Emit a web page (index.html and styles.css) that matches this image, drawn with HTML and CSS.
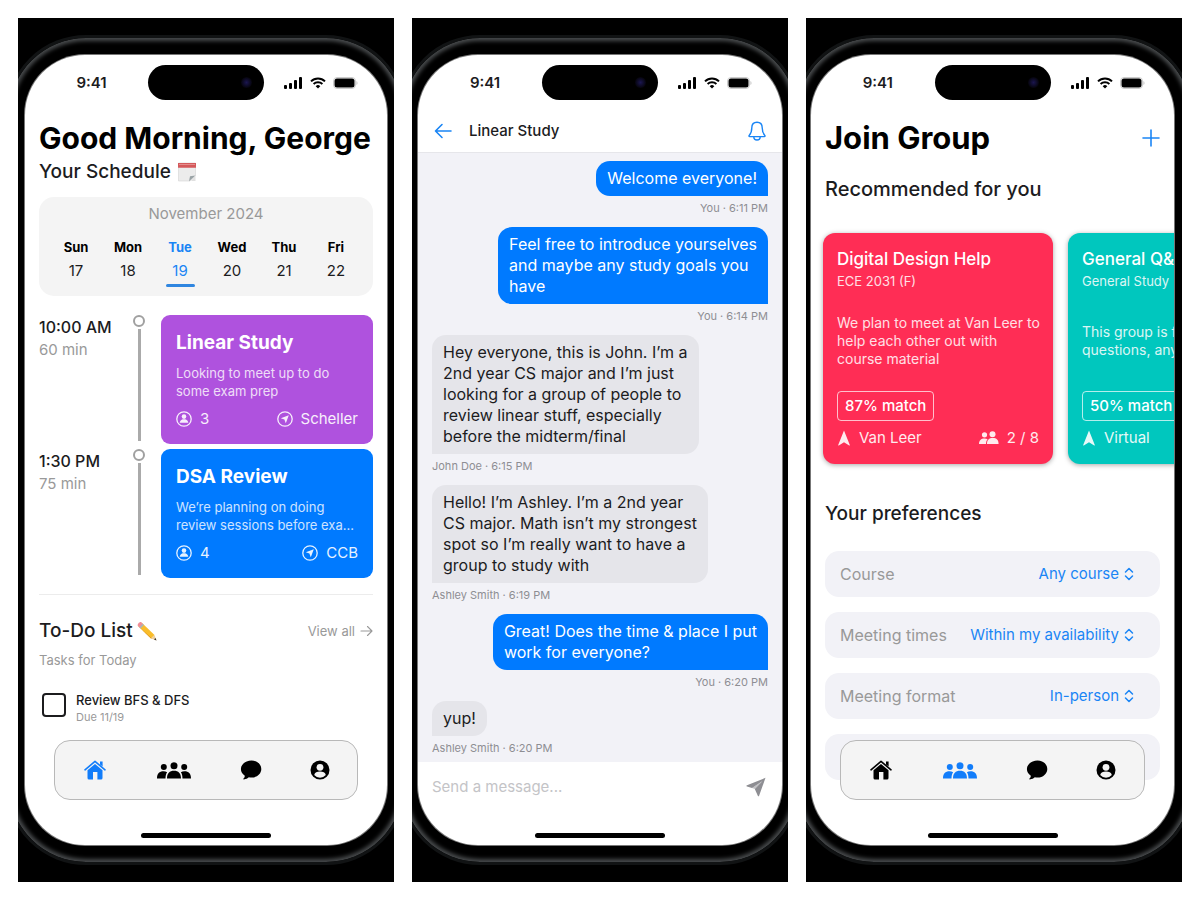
FILE: index.html
```html
<!DOCTYPE html>
<html lang="en">
<head>
<meta charset="utf-8">
<meta name="viewport" content="width=device-width, initial-scale=1">
<title>Study groups</title>
<link rel="stylesheet" href="styles.css">
</head>
<body>
<svg class="sprite" aria-hidden="true">
  <symbol id="signal" viewBox="0 0 19 12">
    <rect x="0" y="8" width="3" height="4" rx="1"/><rect x="5" y="6" width="3" height="6" rx="1"/><rect x="10" y="3" width="3" height="9" rx="1"/><rect x="15" y="0" width="3" height="12" rx="1"/>
  </symbol>
  <symbol id="wifi" viewBox="0 0 16 12">
    <g fill="none" stroke="currentColor" stroke-width="2"><path d="M1 4.4a10 10 0 0 1 14 0"/><path d="M3.6 7a6.4 6.4 0 0 1 8.800 0"/></g><path d="M5.700 9.200a3.300 3.300 0 0 1 4.600 0L8 11.600z"/>
  </symbol>
  <symbol id="battery" viewBox="0 0 25 12">
    <rect x=".5" y=".5" width="22" height="11" rx="3.500" fill="none" stroke="#ccc"/><rect x="1.500" y="1.500" width="20" height="9" rx="2.500"/><path d="M23.500 4v4c1.300-.6 1.300-3.400 0-4z" fill="#bbb"/>
  </symbol>
  <symbol id="home" viewBox="0 0 22 20">
    <path d="M1 9.800 11 1.400l10 8.400" fill="none" stroke="currentColor" stroke-width="1.600" stroke-linecap="round" stroke-linejoin="round"/><path d="M16 1.500h2.600v5L16 4.500z"/><path d="M3.500 10.200 11 4l7.500 6.200V18a1.500 1.500 0 0 1-1.500 1.500h-3.600V12H9v7.500H5A1.500 1.500 0 0 1 3.500 18z"/>
  </symbol>
  <symbol id="group" viewBox="0 0 34 17">
    <circle cx="17" cy="3.800" r="3.500"/><circle cx="6.800" cy="5" r="3"/><circle cx="27.200" cy="5" r="3"/>
    <path d="M10 16.500c0-5.200 2.600-7.700 7-7.700s7 2.500 7 7.700zM0 16.500c0-4.700 2.400-7.200 6.500-7.200 1.400 0 2.600.3 3.600 1C9 11.800 8.500 14 8.500 16.500zM34 16.500c0-4.700-2.400-7.200-6.500-7.200-1.400 0-2.600.3-3.600 1 1.100 1.500 1.600 3.700 1.600 6.200z"/>
  </symbol>
  <symbol id="chat" viewBox="0 0 22 20">
    <path d="M11.500.5C17 .5 21.300 4.200 21.300 9s-4.300 8.600-9.800 8.600c-1 0-1.800-.1-2.700-.3-1.200 1.100-2.700 1.900-5 2.100-.6 0-.7-.5-.3-.9.900-.8 1.300-1.700 1.300-2.800C2.300 14.100.9 11.700.9 9 .9 4.200 6 .5 11.500.5z"/>
  </symbol>
  <symbol id="profile" viewBox="0 0 20 20">
    <circle cx="10" cy="10" r="9.500"/><circle cx="10" cy="7.300" r="3.400" fill="#f4f4f4"/><path d="M4.200 15c.6-2.400 2.800-3.400 5.800-3.400s5.200 1 5.800 3.400a7.700 7.700 0 0 1-11.600 0z" fill="#f4f4f4"/>
  </symbol>
  <symbol id="member" viewBox="0 0 16 16">
    <circle cx="8" cy="8" r="7.200" fill="none" stroke="currentColor" stroke-width="1.300"/><circle cx="8" cy="5.600" r="2.300"/><path d="M3.700 11.800c.2-2 1.500-3 3-3.500h2.600c1.500.5 2.800 1.500 3 3.500z"/>
  </symbol>
  <symbol id="place" viewBox="0 0 16 16">
    <circle cx="8" cy="8" r="7.200" fill="none" stroke="currentColor" stroke-width="1.300"/><path d="m11.800 4.200-3 8-1.400-3.600-3.600-1.400z"/>
  </symbol>
  <symbol id="needle" viewBox="0 0 14 16"><path d="M7 .5 12.800 15c.1.400-.2.700-.6.500L7 12.200l-5.200 3.300c-.4.200-.7-.1-.6-.5z"/></symbol>
  <symbol id="pair" viewBox="0 0 20 14">
    <circle cx="5.500" cy="3.800" r="2.600"/><circle cx="13.500" cy="3.300" r="3"/><path d="M0 13c0-3.700 2-5.600 5.500-5.600 1.300 0 2.300.3 3.100.8C7.500 9.400 7 11 7 13zM8 13c0-4 2-5.900 5.800-5.900S19.600 9 19.600 13z"/>
  </symbol>
  <symbol id="updown" viewBox="0 0 10 14"><path d="m1.500 5 3.500-3.500L8.500 5M1.500 9 5 12.500 8.500 9" fill="none" stroke="currentColor" stroke-width="1.500" stroke-linecap="round" stroke-linejoin="round"/></symbol>
</svg>

<main class="board">
  <section class="panel" aria-label="Home">
    <div class="phone">
      <div class="screen">
        <header class="status">
          <span class="time">9:41</span><span class="island"><i class="lens"></i></span>
          <span class="radios"><svg class="signal"><use href="#signal"/></svg><svg class="wifi"><use href="#wifi"/></svg><svg class="battery"><use href="#battery"/></svg></span>
        </header>
        <div class="content">
          <h1 class="greeting">Good Morning, George</h1>
          <h2 class="schedule-title">Your Schedule
            <svg class="emoji" viewBox="0 0 20 20" aria-hidden="true"><path d="M1.500 1h17v12.500L13 19H1.500z" fill="#ececec" stroke="#d4d4d4" stroke-width=".6"/><path d="M1 1h18v4.800H1z" fill="#d4595b"/><path d="M2 2.500h16" stroke="#e58d8d" stroke-width="1"/><path d="M18.500 13.500 12 19.300l1-5z" fill="#9aa3a6"/><path d="M18.500 13.500 14 19h4.500z" fill="#e0e0e0"/></svg>
          </h2>
          <section class="calendar">
            <p class="month">November 2024</p>
            <ol class="days">
              <li><b>Sun</b><span>17</span></li>
              <li><b>Mon</b><span>18</span></li>
              <li class="today"><b>Tue</b><span>19</span></li>
              <li><b>Wed</b><span>20</span></li>
              <li><b>Thu</b><span>21</span></li>
              <li><b>Fri</b><span>22</span></li>
            </ol>
          </section>
          <ul class="agenda">
            <li class="slot">
              <div class="when"><strong>10:00 AM</strong><span>60 min</span></div>
              <div class="rail"></div>
              <article class="event purple">
                <h3>Linear Study</h3>
                <p>Looking to meet up to do<br>some exam prep</p>
                <div class="facts"><span><svg><use href="#member"/></svg>3</span><span><svg><use href="#place"/></svg>Scheller</span></div>
              </article>
            </li>
            <li class="slot">
              <div class="when"><strong>1:30 PM</strong><span>75 min</span></div>
              <div class="rail"></div>
              <article class="event blue">
                <h3>DSA Review</h3>
                <p>We’re planning on doing<br>review sessions before exa…</p>
                <div class="facts"><span><svg><use href="#member"/></svg>4</span><span><svg><use href="#place"/></svg>CCB</span></div>
              </article>
            </li>
          </ul>
          <section class="todo">
            <div class="todo-head">
              <h2>To-Do List
                <svg class="emoji" viewBox="0 0 20 20" aria-hidden="true"><path d="m4.500 1.500 13 12.500-3.500 3.500L1 5z" fill="#f9bd2b"/><path d="M2.800 6.600 15.500 18l-1.500-.5L1 5z" fill="#d88d16"/><path d="M6 3 2.600 6.600.8 4.800C0 3.500 2.500.5 4.200 1.200z" fill="#ef8d98"/><path d="M7 4 3.500 7.600 2.200 6.400 5.700 2.800z" fill="#a9b4ba"/><path d="m17.500 14 2 5.500-5.500-2z" fill="#efcf9b"/><path d="m18.600 17 .9 2.500-2.500-.9z" fill="#333"/></svg>
              </h2>
              <a href="#tasks">View all <svg class="go" viewBox="0 0 13 12"><path d="M1 6h11M7.500 1.500 12 6l-4.500 4.500" fill="none" stroke="currentColor" stroke-width="1.100" stroke-linecap="round" stroke-linejoin="round"/></svg></a>
            </div>
            <p class="sub">Tasks for Today</p>
            <label class="task" id="tasks"><input type="checkbox"><span class="task-text"><b>Review BFS &amp; DFS</b><small>Due 11/19</small></span></label>
          </section>
        </div>
        <nav class="tabs" aria-label="Main">
          <a class="on" href="#home" aria-label="Home"><svg class="t-home"><use href="#home"/></svg></a>
          <a href="#groups" aria-label="Groups"><svg class="t-group"><use href="#group"/></svg></a>
          <a href="#chats" aria-label="Chats"><svg class="t-chat"><use href="#chat"/></svg></a>
          <a href="#me" aria-label="Profile"><svg class="t-me"><use href="#profile"/></svg></a>
        </nav>
        <div class="home-bar"></div>
      </div>
    </div>
  </section>

  <section class="panel" aria-label="Chat">
    <div class="phone middle">
      <div class="screen">
        <header class="status">
          <span class="time">9:41</span><span class="island"><i class="lens"></i></span>
          <span class="radios"><svg class="signal"><use href="#signal"/></svg><svg class="wifi"><use href="#wifi"/></svg><svg class="battery"><use href="#battery"/></svg></span>
        </header>
        <div class="chat-head">
          <button class="icon-btn" aria-label="Back"><svg class="back" viewBox="0 0 18 16"><path d="M17 8H1.500M8 1.500 1.500 8 8 14.500" fill="none" stroke="currentColor" stroke-width="1.600" stroke-linecap="round" stroke-linejoin="round"/></svg></button>
          <h2>Linear Study</h2>
          <button class="icon-btn" aria-label="Notifications"><svg class="bell" viewBox="0 0 18 20"><path d="M9 1.200c-3.200 0-5.200 2.300-5.200 5.600 0 4.500-1 6-2.600 7.600-.5.600-.2 1.200.5 1.200h14.600c.7 0 1-.6.500-1.200-1.600-1.600-2.600-3.100-2.600-7.600 0-3.300-2-5.600-5.200-5.600zM5.800 15.800a3.200 3.200 0 0 0 6.400 0" fill="none" stroke="currentColor" stroke-width="1.400" stroke-linejoin="round"/></svg></button>
        </div>
        <div class="thread">
          <div class="msg mine"><p>Welcome everyone!</p><small>You · 6:11 PM</small></div>
          <div class="msg mine"><p>Feel free to introduce yourselves<br>and maybe any study goals you<br>have</p><small>You · 6:14 PM</small></div>
          <div class="msg"><p>Hey everyone, this is John. I’m a<br>2nd year CS major and I’m just<br>looking for a group of people to<br>review linear stuff, especially<br>before the midterm/final</p><small>John Doe · 6:15 PM</small></div>
          <div class="msg"><p>Hello! I’m Ashley. I’m a 2nd year<br>CS major. Math isn’t my strongest<br>spot so I’m really want to have a<br>group to study with</p><small>Ashley Smith · 6:19 PM</small></div>
          <div class="msg mine"><p>Great! Does the time &amp; place I put<br>work for everyone?</p><small>You · 6:20 PM</small></div>
          <div class="msg"><p>yup!</p><small>Ashley Smith · 6:20 PM</small></div>
        </div>
        <form class="composer">
          <input type="text" placeholder="Send a message..." aria-label="Message">
          <button class="icon-btn" type="button" aria-label="Send"><svg class="send" viewBox="0 0 20 20"><path d="M19.500.8 1 8.200c-.8.400-.8 1 0 1.300l5 1.400L16.500 4 8.800 12l3 6.800c.4.700 1 .7 1.300 0z"/><path d="m8.800 12 7.700-8L6 10.900z" opacity=".55"/></svg></button>
        </form>
        <div class="home-bar"></div>
      </div>
    </div>
  </section>

  <section class="panel" aria-label="Join group">
    <div class="phone last">
      <div class="screen">
        <header class="status">
          <span class="time">9:41</span><span class="island"><i class="lens"></i></span>
          <span class="radios"><svg class="signal"><use href="#signal"/></svg><svg class="wifi"><use href="#wifi"/></svg><svg class="battery"><use href="#battery"/></svg></span>
        </header>
        <div class="content">
          <div class="title-row">
            <h1>Join Group</h1>
            <button class="icon-btn" aria-label="New group"><svg class="plus" viewBox="0 0 18 18"><path d="M9 1v16M1 9h16" stroke="currentColor" stroke-width="1.600" stroke-linecap="round"/></svg></button>
          </div>
          <h2 class="rec-title">Recommended for you</h2>
          <div class="carousel">
            <article class="card red">
              <h3>Digital Design Help</h3>
              <p class="course">ECE 2031 (F)</p>
              <p class="about">We plan to meet at Van Leer to<br>help each other out with<br>course material</p>
              <span class="match">87% match</span>
              <div class="facts"><span><svg class="needle"><use href="#needle"/></svg>Van Leer</span><span><svg class="pair"><use href="#pair"/></svg>2 / 8</span></div>
            </article>
            <article class="card teal">
              <h3>General Q&amp;A</h3>
              <p class="course">General Study</p>
              <p class="about">This group is for<br>questions, any</p>
              <span class="match">50% match</span>
              <div class="facts"><span><svg class="needle"><use href="#needle"/></svg>Virtual</span></div>
            </article>
          </div>
          <h2 class="pref-title">Your preferences</h2>
          <div class="prefs">
            <div class="pref"><label for="course">Course</label><select id="course"><option>Any course</option></select><svg class="updown"><use href="#updown"/></svg></div>
            <div class="pref"><label for="times">Meeting times</label><select id="times"><option>Within my availability</option></select><svg class="updown"><use href="#updown"/></svg></div>
            <div class="pref"><label for="format">Meeting format</label><select id="format"><option>In-person</option></select><svg class="updown"><use href="#updown"/></svg></div>
            <div class="pref"></div>
          </div>
        </div>
        <nav class="tabs" aria-label="Main">
          <a href="#home" aria-label="Home"><svg class="t-home"><use href="#home"/></svg></a>
          <a class="on" href="#groups" aria-label="Groups"><svg class="t-group"><use href="#group"/></svg></a>
          <a href="#chats" aria-label="Chats"><svg class="t-chat"><use href="#chat"/></svg></a>
          <a href="#me" aria-label="Profile"><svg class="t-me"><use href="#profile"/></svg></a>
        </nav>
        <div class="home-bar"></div>
      </div>
    </div>
  </section>
</main>
</body>
</html>
```
FILE: styles.css
```css
*, ::before, ::after { box-sizing: border-box; }
body, h1, h2, h3, p, ol, ul { margin: 0; padding: 0; }
ol, ul { list-style: none; }
a { color: inherit; text-decoration: none; }
svg { display: block; fill: currentColor; flex: none; }
button, input, select { font: inherit; }

body {
  background: #fff;
  color: #1c1c1e;
  font: 400 15px/20px Inter, "Noto Sans", sans-serif;
}
.sprite { position: absolute; width: 0; height: 0; }

.board {
  display: grid;
  grid-template-columns: repeat(3, minmax(0, 1fr));
  gap: 18px;
  min-height: 100vh;
  padding: 18px;
}
.panel { display: flex; overflow: hidden; background: #000; }

/* device frame */
.phone {
  flex: 1;
  min-width: 0;
  display: flex;
  margin: 17px -12px;
  padding: 17px 16px;
  border: 3px solid #111314;
  border-radius: 80px;
  background: #000;
  box-shadow: inset 0 0 4px 3px #4a4d4f;
}
.phone.middle { padding: 17px 15px; }
.phone.last { padding: 17px 17px 17px 14px; }
.screen {
  position: relative;
  flex: 1;
  min-width: 0;
  display: flex;
  flex-direction: column;
  overflow: hidden;
  border-radius: 60px;
  background: #fff;
  box-shadow: 0 0 0 1px #777;
}

.status {
  display: grid;
  grid-template-columns: 1fr 116px 1fr;
  align-items: center;
  padding: 10px 0;
}
.time { padding-left: 10px; text-align: center; font-weight: 600; }
.island {
  display: flex;
  align-items: center;
  justify-content: flex-end;
  height: 35px;
  padding-right: 12px;
  border-radius: 18px;
  background: #000;
}
.lens { width: 11px; height: 11px; border-radius: 50%; background: radial-gradient(#1b1650, #05040c 70%); }
.radios { display: flex; align-items: center; gap: 7px; padding-left: 20px; color: #000; }
.signal { width: 19px; height: 12px; }
.wifi { width: 16px; height: 12px; }
.battery { width: 25px; height: 12px; }

.content { flex: 1; padding: 10px 14px 0; }
h1 { font-size: 31px; line-height: 36px; font-weight: 700; color: #000; white-space: nowrap; }
h2 { font-size: 19px; line-height: 26px; font-weight: 500; }
.greeting { font-size: 30px; }
.emoji { width: 20px; height: 20px; }

/* home */
.schedule-title { display: flex; align-items: center; gap: 6px; margin-top: 3px; }
.calendar { margin-top: 12px; padding: 7px 11px 9px; border-radius: 15px; background: #f4f4f4; }
.month { text-align: center; color: #999; }
.days { display: grid; grid-template-columns: repeat(6, 1fr); margin-top: 14px; }
.days li { display: flex; flex-direction: column; align-items: center; }
.days b { font-size: 13px; line-height: 18px; color: #000; }
.days span { margin-top: 5px; }
.days li::after { content: ""; width: 29px; height: 3px; margin-top: 3px; border-radius: 2px; }
.days .today, .days .today b { color: #1a85f5; }
.days .today::after { background: #2f86e0; }

.agenda { display: grid; gap: 5px; margin-top: 19px; }
.slot { display: grid; grid-template-columns: 94px 28px 1fr; }
.when strong { display: block; font-size: 16px; line-height: 24px; font-weight: 500; }
.when span { display: block; line-height: 22px; color: #999; }
.rail { display: flex; flex-direction: column; align-items: flex-start; gap: 2px; padding-bottom: 3px; }
.rail::before { content: ""; width: 12px; height: 12px; border: 2px solid #a0a0a0; border-radius: 50%; }
.rail::after { content: ""; flex: 1; width: 3px; margin-left: 5px; background: #aaa; }
.event { padding: 16px 15px 15px; border-radius: 9px; color: #fff; }
.event h3 { font-size: 19px; line-height: 24px; font-weight: 700; }
.event p { margin: 9px 0; font-size: 13px; line-height: 18px; opacity: .8; white-space: nowrap; }
.purple { background: #af52de; }
.blue { background: #007aff; }
.facts { display: flex; justify-content: space-between; opacity: .9; }
.facts span { display: flex; align-items: center; gap: 8px; }
.facts svg { width: 16px; height: 16px; }

.todo { margin-top: 16px; padding-top: 23px; border-top: 1px solid #ececec; }
.todo-head { display: flex; align-items: center; justify-content: space-between; }
.todo-head h2 { display: flex; align-items: center; gap: 4px; }
.todo-head a { display: flex; align-items: center; gap: 5px; font-size: 13px; color: #999; }
.go { width: 13px; height: 12px; }
.sub { margin-top: 7px; font-size: 13px; line-height: 18px; color: #999; }
.task { display: flex; gap: 10px; margin-top: 22px; padding-left: 3px; }
.task input { appearance: none; width: 24px; height: 24px; margin: 2px 0; border: 2px solid #1c1c1e; border-radius: 4px; }
.task-text { display: grid; }
.task b { font-size: 13px; line-height: 18px; font-weight: 500; }
.task small { font-size: 11px; line-height: 16px; color: #999; }

.tabs {
  position: absolute;
  left: 29px;
  right: 29px;
  bottom: 45px;
  display: grid;
  grid-template-columns: 80px 78px 76px 62px;
  justify-content: start;
  align-items: center;
  height: 60px;
  border: 1px solid #b8b8b8;
  border-radius: 16px;
  background: #f4f4f4;
  color: #000;
}
.tabs a { display: grid; place-items: center; height: 100%; }
.tabs .on { color: #127dfa; }
.t-home { width: 22px; height: 20px; }
.t-group { width: 34px; height: 17px; }
.t-chat { width: 22px; height: 20px; }
.t-me { width: 20px; height: 20px; }
.home-bar {
  position: absolute;
  left: 50%;
  bottom: 7px;
  width: 130px;
  height: 5px;
  margin-left: -65px;
  border-radius: 3px;
  background: #000;
}

/* chat */
.icon-btn { padding: 0; border: 0; background: none; color: #1a85f5; cursor: pointer; }
.chat-head { display: flex; align-items: center; height: 42px; padding: 0 16px; }
.chat-head h2 { flex: 1; padding-left: 17px; font-size: 15px; line-height: 24px; }
.back { width: 18px; height: 16px; }
.bell { width: 18px; height: 20px; }
.thread {
  flex: 1;
  display: flex;
  flex-direction: column;
  gap: 11px;
  padding: 8px 14px 0;
  border-top: 1px solid #e6e6ea;
  background: #f2f2f7;
}
.msg { display: flex; flex-direction: column; align-items: flex-start; }
.msg p { padding: 7px 11px; border-radius: 14px 14px 14px 0; background: #e5e5ea; font-size: 16px; line-height: 21px; white-space: nowrap; }
.msg small { margin-top: 4px; font-size: 11px; line-height: 16px; color: #8e8e93; }
.msg.mine { align-items: flex-end; }
.msg.mine p { border-radius: 14px 14px 0 14px; background: #007aff; color: #fff; }
.composer { display: flex; align-items: flex-start; height: 83px; padding: 13px 16px 0 14px; }
.composer input { flex: 1; min-width: 0; padding: 0; border: 0; outline: 0; background: none; line-height: 24px; }
.composer input::placeholder { color: #c4c4c7; }
.composer .icon-btn { margin-top: 2px; color: #8e8e93; }
.send { width: 20px; height: 20px; }

/* join group */
.title-row { display: flex; align-items: center; justify-content: space-between; }
.plus { width: 18px; height: 18px; }
.rec-title { margin-top: 20px; font-size: 20px; }
.carousel { display: flex; gap: 15px; margin: 23px -14px 0; padding: 8px 12px; overflow: hidden; }
.card {
  flex: none;
  display: flex;
  flex-direction: column;
  width: 230px;
  min-height: 231px;
  padding: 14px 14px 16px;
  border-radius: 12px;
  color: #fff;
  box-shadow: 0 1px 5px rgba(0, 0, 0, .35);
}
.red { background: #ff2d55; }
.teal { background: #00c7be; }
.card h3 { font-size: 17px; line-height: 24px; font-weight: 500; }
.course { margin-top: 1px; font-size: 13px; line-height: 18px; opacity: .85; }
.about { flex: 1; display: flex; align-items: center; font-size: 14px; line-height: 18px; opacity: .85; white-space: nowrap; }
.match { align-self: flex-start; margin-bottom: 7px; padding: 4px 7px; border: 1px solid rgba(255, 255, 255, .7); border-radius: 4px; font-weight: 500; white-space: nowrap; }
.card .needle { width: 14px; }
.card .pair { width: 20px; height: 14px; }
.pref-title { margin-top: 29px; }
.prefs { display: grid; gap: 15px; margin-top: 24px; }
.pref { display: flex; align-items: center; height: 46px; padding: 0 26px 0 15px; border-radius: 14px; background: #f2f2f7; }
.pref label { font-size: 16px; color: #999; white-space: nowrap; }
.pref select { flex: 1; min-width: 0; padding: 0; border: 0; appearance: none; background: none; color: #1a85f5; text-align-last: right; }
.updown { width: 10px; height: 14px; margin-left: 5px; color: #1a85f5; }
```
